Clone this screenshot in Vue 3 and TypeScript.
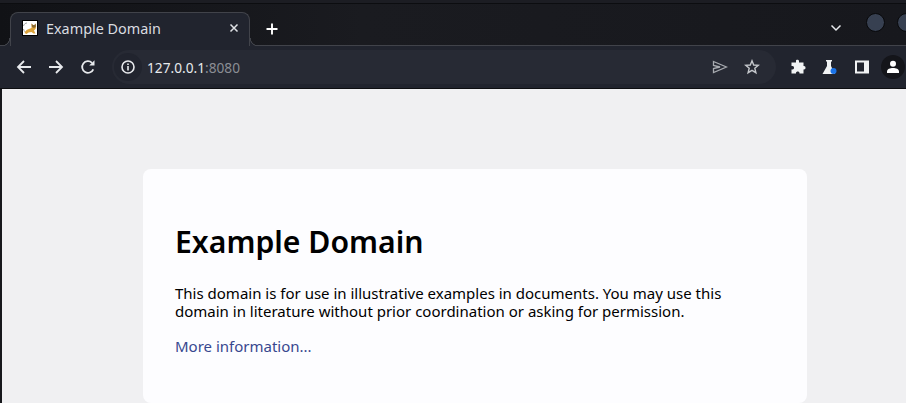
<script setup lang="ts">
const title = 'Example Domain'
</script>

<template>
  <div class="window">
    <div class="tabstrip">
      <div class="tab">
        <svg class="favicon" viewBox="0 0 16 16" width="16" height="16" aria-hidden="true">
          <rect width="16" height="16" fill="#fff" />
          <path d="M1.500 6 C2 4 3.500 3 5 3 M1.500 9 C2 11 3 12 4 12.500" fill="none" stroke="#8b8b8b" stroke-width="0.800" />
          <path d="M2.500 13 C3.500 10.500 5 9.500 7 9 L9.500 8 L9.500 3.500 L11 5 L12.500 5 L13.500 3.500 L14 7.500 C13.500 9.500 12.500 10 12 10.500 L13.500 13.500 L11.500 13.500 L9.500 12 L6.500 12.500 L4.500 14 Z" fill="#dca33b" />
          <path d="M9.500 3.500 L11 5 L12.500 5 L13.500 3.500 L14 6.500 L12 8 L10 7 Z" fill="#8a6a32" />
          <rect x="0.500" y="0.500" width="15" height="15" fill="none" stroke="#000" />
        </svg>
        <span class="tab-title">{{ title }}</span>
        <svg class="tab-close" viewBox="0 0 10 10" width="10" height="10" aria-hidden="true">
          <path d="M1.500 1.500 L8.500 8.500 M8.500 1.500 L1.500 8.500" stroke="#dfe1e5" stroke-width="1.500" />
        </svg>
      </div>
      <svg class="new-tab" viewBox="0 0 12 12" width="12" height="12" aria-hidden="true">
        <path d="M6 0.500 V11.500 M0.500 6 H11.500" stroke="#fff" stroke-width="1.900" />
      </svg>
      <div class="strip-right">
        <svg class="chevron" viewBox="0 0 12 8" width="12" height="8" aria-hidden="true">
          <path d="M1.500 1.500 L6 6 L10.500 1.500" fill="none" stroke="#e8eaed" stroke-width="1.500" />
        </svg>
        <span class="dot"></span>
        <span class="dot"></span>
      </div>
    </div>

    <div class="toolbar">
      <svg class="nav" viewBox="0 0 16 16" width="16" height="16" aria-hidden="true">
        <path d="M15 8 H2 M8 2 L2 8 L8 14" fill="none" stroke="#e8eaed" stroke-width="1.800" />
      </svg>
      <svg class="nav" viewBox="0 0 16 16" width="16" height="16" aria-hidden="true">
        <path d="M1 8 H14 M8 2 L14 8 L8 14" fill="none" stroke="#e8eaed" stroke-width="1.800" />
      </svg>
      <svg class="nav" viewBox="0 0 16 16" width="16" height="16" aria-hidden="true">
        <path d="M13.300 10.300 A5.800 5.800 0 1 1 12 3.800" fill="none" stroke="#e8eaed" stroke-width="1.800" />
        <path d="M14.500 1.200 V6.500 H9.200 Z" fill="#e8eaed" />
      </svg>
      <div class="omnibox">
        <span class="info-wrap">
          <svg viewBox="0 0 16 16" width="16" height="16" aria-hidden="true">
            <circle cx="8" cy="8" r="6" fill="none" stroke="#e8eaed" stroke-width="1.600" />
            <path d="M8 7 V11.500 M8 4.500 V6" stroke="#e8eaed" stroke-width="1.600" />
          </svg>
        </span>
        <span class="url">127.0.0.1<span class="port">:8080</span></span>
        <svg class="send" viewBox="0 0 16 16" width="16" height="16" aria-hidden="true">
          <path d="M1.500 2.500 L14.500 8 L1.500 13.500 V9.500 L8 8 L1.500 6.500 Z" fill="none" stroke="#a8abb0" stroke-width="1.300" />
        </svg>
        <svg class="star" viewBox="0 0 16 16" width="16" height="16" aria-hidden="true">
          <path d="M8 1.800 L9.700 6 L14.300 6.300 L10.800 9.200 L11.900 13.700 L8 11.300 L4.100 13.700 L5.200 9.200 L1.700 6.300 L6.300 6 Z" fill="none" stroke="#c4c7cb" stroke-width="1.400" />
        </svg>
      </div>
      <div class="extensions">
        <svg viewBox="0 0 16 16" width="16" height="16" aria-hidden="true">
          <path d="M6 1.500 C6 0.500 9 0.500 9 2 V3.500 H13.500 V7 H14 C16 7 16 10.500 14 10.500 H13.500 V14.500 H9.500 V14 C9.500 12 6 12 6 14 V14.500 H1.500 V10.500 H2.500 C4.500 10.500 4.500 7 2.500 7 H1.500 V3.500 H6 Z" fill="#f1f3f4" />
        </svg>
        <svg viewBox="0 0 16 16" width="16" height="16" aria-hidden="true">
          <path d="M5 1 H11 V2.500 H10 V7 L14 15 H1.500 L6 7 V2.500 H5 Z" fill="#f1f3f4" />
          <circle cx="12.500" cy="12" r="3" fill="#1a73e8" />
        </svg>
        <svg class="panel" viewBox="0 0 16 16" width="16" height="16" aria-hidden="true">
          <path fill-rule="evenodd" d="M1 1.500 H15 V14.500 H1 Z M3 3.500 V12.500 H10 V3.500 Z" fill="#f1f3f4" />
        </svg>
        <span class="avatar">
          <svg viewBox="0 0 16 16" width="16" height="16" aria-hidden="true">
            <circle cx="8" cy="4.800" r="3" fill="#fff" />
            <path d="M2 14 V12.500 C2 10 5 9 8 9 C11 9 14 10 14 12.500 V14 Z" fill="#fff" />
          </svg>
        </span>
      </div>
    </div>

    <main class="page">
      <section class="card">
        <h1>{{ title }}</h1>
        <p>This domain is for use in illustrative examples in documents. You may use this domain in literature without prior coordination or asking for permission.</p>
        <p><a href="#" @click.prevent>More information...</a></p>
      </section>
    </main>
  </div>
</template>

<style scoped>
.window {
  width: 906px;
  height: 403px;
  overflow: hidden;
  display: flex;
  flex-direction: column;
  background: #101114;
  font-family: "Noto Sans", sans-serif;
}
.tabstrip {
  height: 45px;
  flex: none;
  box-sizing: border-box;
  padding: 12px 0 0 10px;
  display: flex;
  align-items: flex-start;
  background:
    linear-gradient(#1c1d23 0 3px, #0c0d10 3px 4px, transparent 4px),
    linear-gradient(90deg, #111216, #1a1b20 40%, #17181d);
}
.tab {
  position: relative;
  z-index: 1;
  width: 240px;
  height: 34px;
  box-sizing: border-box;
  flex: none;
  display: flex;
  align-items: center;
  padding: 0 6px 3px 11px;
  background: #21242e;
  border: 1px solid #41434a;
  border-bottom: 0;
  border-radius: 8px 8px 0 0;
  color: #dadce0;
}
.tab::before,
.tab::after {
  content: "";
  position: absolute;
  bottom: 0;
  width: 8px;
  height: 8px;
}
.tab::before {
  left: -9px;
  background: radial-gradient(circle at 0 0, transparent 7px, #41434a 7.5px, #41434a 8px, #21242e 8.5px);
}
.tab::after {
  right: -9px;
  background: radial-gradient(circle at 100% 0, transparent 7px, #41434a 7.5px, #41434a 8px, #21242e 8.5px);
}
.favicon {
  flex: none;
}
.tab-title {
  margin-left: 8px;
  font-size: 14.4px;
  flex: 1;
}
.tab-close {
  flex: none;
  margin-right: 4px;
}
.new-tab {
  margin: 11px 0 0 16px;
  flex: none;
}
.strip-right {
  margin-left: auto;
  display: flex;
  align-items: center;
  gap: 12px;
  margin-right: -10px;
  margin-top: 1px;
  flex: none;
}
.chevron {
  margin: 11px 12px 0 0;
}
.dot {
  width: 17px;
  height: 17px;
  flex: none;
  border-radius: 50%;
  background: #374051;
  border: 1px solid #08090b;
}
.toolbar {
  height: 44px;
  flex: none;
  box-sizing: border-box;
  display: flex;
  align-items: center;
  padding: 0 0 0 16px;
  background: #21242e;
  border-bottom: 1px solid #0d0e11;
  border-top: 1px solid #41434a;
}
.nav {
  flex: none;
  margin-right: 16px;
}
.omnibox {
  width: 664px;
  height: 34px;
  flex: none;
  display: flex;
  align-items: center;
  background: #272a34;
  border-radius: 17px;
  color: #e8eaed;
  font-size: 13.7px;
  box-sizing: border-box;
}
.info-wrap {
  width: 28px;
  height: 28px;
  margin-left: 2px;
  display: flex;
  align-items: center;
  justify-content: center;
  border-radius: 50%;
  background: #21242e;
}
.url {
  margin-left: 5px;
  flex: 1;
}
.port {
  color: #8b8e94;
}
.send {
  margin-right: 16px;
}
.star {
  margin-right: 16px;
}
.extensions {
  display: flex;
  align-items: center;
  gap: 15px;
  margin-left: 14px;
  flex: none;
}
.panel {
  margin-left: 2px;
}
.avatar {
  width: 24px;
  height: 24px;
  margin-left: -4px;
  border-radius: 50%;
  display: flex;
  align-items: center;
  justify-content: center;
  background: #14151a;
}
.page {
  flex: 1;
  min-height: 0;
  background: #f0f0f2;
  border-left: 2px solid #17181c;
  padding: 80px 0 0 141px;
}
.card {
  width: 600px;
  height: 170px;
  padding: 32px;
  border-radius: 8px;
  background: #fdfdff;
  color: #000;
}
h1 {
  margin: 19px 0 0;
  font-size: 30.2px;
  line-height: 44px;
  font-weight: 600;
}
p {
  margin: 20px 0 0;
  font-size: 15px;
  line-height: 18px;
}
p + p {
  margin-top: 17px;
}
a {
  color: #38488f;
  text-decoration: none;
}
</style>

<style>
html, body { margin: 0; background: #101114; }
</style>
